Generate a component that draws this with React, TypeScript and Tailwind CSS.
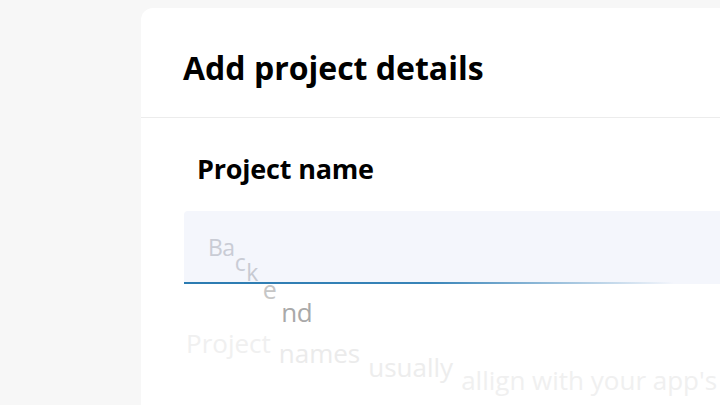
const placeholder = [
  { ch: "B", cls: "translate-y-0 text-[#c9ccd5]" },
  { ch: "a", cls: "translate-y-0 text-[#c9ccd5]" },
  { ch: "c", cls: "translate-y-[15px] translate-x-0 text-[#c9ccd5]" },
  { ch: "k", cls: "translate-y-[25px] translate-x-[1px] text-[#c7cad2]" },
  { ch: "e", cls: "translate-y-[43px] translate-x-[6px] text-[25px] text-[#c6c6c6]" },
  { ch: "nd", cls: "translate-y-[66px] translate-x-[11px] text-[26px] text-[#a9a9a9]" },
];

const helper = [
  { w: "Project", cls: "translate-y-0 text-[#f0f0f0]" },
  { w: "names", cls: "translate-y-[10px] text-[#ebebeb]" },
  { w: "usually", cls: "translate-y-[24px] text-[#ededed]" },
  { w: "allign with your app's", cls: "translate-y-[37px] text-[#f0f0f0]" },
];

export default function App() {
  return (
    <div className="h-[405px] w-[720px] overflow-hidden bg-[#f7f7f7] pl-[141px] pt-[8px] font-['Open_Sans',sans-serif]">
      <div className="h-[420px] w-[600px] rounded-tl-[12px] bg-white">
        <div className="h-[109px] pl-[42px] pt-[36px]">
          <h1 className="text-[32px] leading-[48px] font-bold text-black">Add project details</h1>
        </div>
        <div className="h-px bg-[#ececec]" />

        <div className="pl-[43px] pt-[34px]">
          <p className="pl-[13px] text-[27px] leading-[34px] font-bold tracking-[-0.2px] text-black">Project name</p>

          <div className="relative mt-[25px] h-[73px] rounded-tl-[4px] bg-[#f4f6fc]">
            <div className="flex items-baseline pl-[24px] pt-[20px] text-[23px] leading-[30px] tracking-[-0.5px]">
              {placeholder.map((p) => (
                <span key={p.ch} className={`inline-block ${p.cls}`}>
                  {p.ch}
                </span>
              ))}
            </div>
            <div className="absolute bottom-0 left-0 h-[2px] w-[490px] bg-gradient-to-r from-[#2b7bb1] from-0% via-[#3884b8] via-50% to-transparent to-100%" />
          </div>

          <div className="mt-[44px] flex gap-[8px] pl-[2px] text-[26px] leading-[30px]">
            {helper.map((h) => (
              <span key={h.w} className={`inline-block whitespace-nowrap ${h.cls}`}>
                {h.w}
              </span>
            ))}
          </div>
        </div>
      </div>
    </div>
  );
}
